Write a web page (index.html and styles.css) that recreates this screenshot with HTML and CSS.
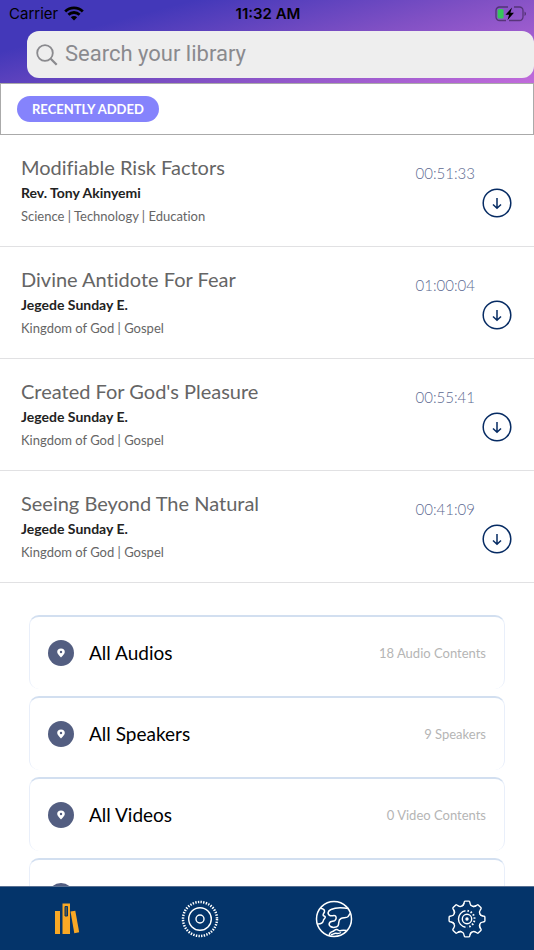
FILE: index.html
```html
<!DOCTYPE html>
<html lang="en">
<head>
<meta charset="utf-8">
<meta name="viewport" content="width=device-width, initial-scale=1">
<title>Library</title>
<link rel="stylesheet" href="styles.css">
</head>
<body>
<svg class="sprite" aria-hidden="true">
  <symbol id="download" viewBox="0 0 30 30"><circle cx="15" cy="15" r="13.8" fill="none" stroke="currentColor" stroke-width="1.5"/><path d="M15 10v10M11 16.5l4 3.8 4-3.8" fill="none" stroke="currentColor" stroke-width="1.5"/></symbol>
  <symbol id="pin" viewBox="0 0 26 26"><circle cx="13" cy="13" r="13" fill="#535e81"/><path fill="#fff" fill-rule="evenodd" d="M13 17.500c-2-2.300-3.800-3.600-3.800-5.500a3.800 3.500 0 0 1 7.600 0c0 1.900-1.800 3.200-3.800 5.500zM13 10.800a1.200 1.200 0 1 0 0 2.400 1.200 1.200 0 0 0 0-2.400z"/></symbol>
</svg>
<div class="app">
  <header class="top">
    <div class="status">
      <div class="carrier">Carrier
        <svg width="20" height="15" viewBox="0 0 20 15" fill="none" stroke="#000" stroke-width="2.800"><path d="M1.200 5.400a12.500 12.500 0 0 1 17.600 0M4.400 8.800a8 8 0 0 1 11.200 0"/><path d="M10 14.500l-3.200-3.300a4.600 4.600 0 0 1 6.400 0z" fill="#000" stroke="none"/></svg>
      </div>
      <time class="clock">11:32 AM</time>
      <svg class="battery" width="32" height="16" viewBox="0 0 32 16"><path d="M13 1H4.500A3.500 3.500 0 0 0 1 4.500V11a3.500 3.500 0 0 0 3.500 3.500h6.500M19 1h5.500A3.500 3.500 0 0 1 28 4.500V11a3.500 3.500 0 0 1-3.500 3.500H14" fill="none" stroke="#000" stroke-opacity=".4" stroke-width="1.300"/><path d="M29.500 5.500c2 .8 2 3.700 0 4.500z" fill="#000" fill-opacity=".4"/><rect x="2.600" y="3" width="6" height="9.500" rx="1.500" fill="#34c759"/><path d="M17 1.500l-6.500 7.200h3.600L12.500 14l6.500-7.200h-3.600z" fill="#000"/></svg>
    </div>
    <label class="search">
      <svg width="22" height="22" viewBox="0 0 22 22" fill="none" stroke="#8a8a8e" stroke-width="1.800"><circle cx="9" cy="9" r="7.800"/><path d="M14.700 14.700l6 6" stroke-width="2.300"/></svg>
      <input type="search" placeholder="Search your library" aria-label="Search your library">
    </label>
  </header>
  <main class="content">
    <div class="heading"><h1 class="pill">RECENTLY ADDED</h1></div>
    <ul class="tracks">
      <li class="track"><div class="info"><h2>Modifiable Risk Factors</h2><p class="speaker">Rev. Tony Akinyemi</p><p class="tags">Science | Technology | Education</p></div><time class="duration">00:51:33</time><button class="download" aria-label="Download"><svg width="30" height="30"><use href="#download"/></svg></button></li>
      <li class="track"><div class="info"><h2>Divine Antidote For Fear</h2><p class="speaker">Jegede Sunday E.</p><p class="tags">Kingdom of God | Gospel</p></div><time class="duration">01:00:04</time><button class="download" aria-label="Download"><svg width="30" height="30"><use href="#download"/></svg></button></li>
      <li class="track"><div class="info"><h2>Created For God's Pleasure</h2><p class="speaker">Jegede Sunday E.</p><p class="tags">Kingdom of God | Gospel</p></div><time class="duration">00:55:41</time><button class="download" aria-label="Download"><svg width="30" height="30"><use href="#download"/></svg></button></li>
      <li class="track"><div class="info"><h2>Seeing Beyond The Natural</h2><p class="speaker">Jegede Sunday E.</p><p class="tags">Kingdom of God | Gospel</p></div><time class="duration">00:41:09</time><button class="download" aria-label="Download"><svg width="30" height="30"><use href="#download"/></svg></button></li>
    </ul>
    <div class="categories">
      <a class="category" href="#audios"><svg width="26" height="26"><use href="#pin"/></svg><span class="name">All Audios</span><span class="count">18 Audio Contents</span></a>
      <a class="category" href="#speakers"><svg width="26" height="26"><use href="#pin"/></svg><span class="name">All Speakers</span><span class="count">9 Speakers</span></a>
      <a class="category" href="#videos"><svg width="26" height="26"><use href="#pin"/></svg><span class="name">All Videos</span><span class="count">0 Video Contents</span></a>
      <a class="category" href="#more" aria-label="More"><svg width="26" height="26"><use href="#pin"/></svg></a>
    </div>
  </main>
  <nav class="tabs">
    <a href="#library" aria-label="Library"><svg width="38" height="38" viewBox="0 0 38 38"><g fill="#f9a825"><path d="M7 11h5v23H7zM14.500 3.500H22V34h-7.500z"/><path d="M22.500 11.500l4.800-.8L31.200 32.300l-4.900.9z"/></g><path d="M17 6.500h2.500v9.500H17z" fill="#5a5a48" stroke="#04346a"/></svg></a>
    <a href="#player" aria-label="Player"><svg width="38" height="38" viewBox="0 0 38 38" fill="none" stroke="#fff"><circle cx="19" cy="19" r="17" stroke-width="2.500" stroke-dasharray="1.400 1.270"/><circle cx="19" cy="19" r="11.300" stroke-width="1.400"/><circle cx="19" cy="19" r="4" stroke-width="1.400"/></svg></a>
    <a href="#world" aria-label="World"><svg width="38" height="38" viewBox="0 0 38 38" fill="none" stroke="#fff" stroke-width="1.500" stroke-linejoin="round"><circle cx="19" cy="19" r="17.500"/><path d="M33.700 8.500C28 7.500 20 7.500 16 9.500c-3.500 1.500-4 5-.7 6.200 2 .5 4-.8 5.200.3 1.200 1.500.7 3.500-.8 4.600-1.500 1-4 .5-5 1.900-.9 1.500-.6 3 .8 4 2.500 1.500 6 1 7.500-.8 1.500-2-.5-5.500 3-7.200 2-1 5-.5 6.500-1.500 1.500-1.200 1.800-3 3.200-4.200M5.800 8.300c2.500.5 4 1.500 3.700 3.500-.4 1.500-1.800 2.200-1.300 3.600.6.700 2 .6 2.100 1.600 0 1.500-1.800 2-2 3.700-.3 1.800-2.300 3.300-5.300 3.300M14.500 35.500c-.5-2 1-3.500 3-4 1.700-.4 2-2 4.300-1.900 1.400.1 1.800 1.200 3 1.200 1.500 0 2-1.200 6.700-.3M16 34.500c2 .5 3-1.500 5-1.200 2 .5 3.500.2 5-.8"/></svg></a>
    <a href="#settings" aria-label="Settings"><svg width="38" height="38" viewBox="0 0 38 38" fill="none" stroke="#fff" stroke-width="1.400" stroke-linejoin="round"><g><path id="tooth" d="M13.700 6.200Q15.600 5.500 15.900 3.600L16.300 1.900Q16.500 1.100 17.300 1.100H20.700Q21.500 1.100 21.700 1.900L22.100 3.600Q22.400 5.500 24.300 6.200Q26 7 28.050 5.700"/><use href="#tooth" transform="rotate(45 19 19)"/><use href="#tooth" transform="rotate(90 19 19)"/><use href="#tooth" transform="rotate(135 19 19)"/><use href="#tooth" transform="rotate(180 19 19)"/><use href="#tooth" transform="rotate(225 19 19)"/><use href="#tooth" transform="rotate(270 19 19)"/><use href="#tooth" transform="rotate(315 19 19)"/></g><circle cx="19" cy="19" r="4.700"/><circle cx="19" cy="19" r="1" fill="#fff"/><path d="M17.500 10.800a8.300 8.300 0 0 0 0 16.400"/><path d="M19.500 10.800a8.300 8.300 0 0 1 0 16.400" stroke-width="2" stroke-dasharray="1.500 1.800"/></svg></a>
  </nav>
</div>
</body>
</html>
```

FILE: styles.css
```css
* { box-sizing: border-box; }
body { margin: 0; background: #fff; font-family: Lato, sans-serif; font-variant-ligatures: none; }
h1, h2, p, ul { margin: 0; padding: 0; font-weight: 400; }
svg { display: block; flex: none; }
.sprite { position: absolute; width: 0; height: 0; }
.app { height: 100vh; display: flex; flex-direction: column; }
.top { flex: none; padding: 0 0 5px 27px; background: linear-gradient(165deg, #4338b9 23%, #8050c4 58%, #c16bdb 100%); overflow: hidden; }
.status { display: grid; grid-template-columns: 1fr auto 1fr; align-items: center; height: 31px; margin-left: -27px; padding: 0 7px 4px 9px; font: 15px/20px Inter, sans-serif; color: #000; }
.carrier { display: flex; align-items: center; gap: 6px; }
.clock { font-weight: 600; }
.battery { justify-self: end; }
.search { display: flex; align-items: center; gap: 7px; height: 47px; padding: 0 9px; border-radius: 12px; background: #eee; }
.search input { flex: 1; min-width: 0; height: 100%; padding: 0 0 2px; border: 0; outline: 0; background: none; font: 22px/28px Roboto, sans-serif; color: #333; }
.search input::placeholder { color: #8a8a8e; opacity: 1; }
.content { flex: 1; min-height: 0; overflow: hidden; }
.heading { padding: 12px 16px; border: 1px solid #aaa; }
.pill { width: fit-content; padding: 0 15px; border-radius: 13px; background: #8583fc; color: #fff; font-size: 13px; font-weight: 700; line-height: 26px; }
.tracks { list-style: none; }
.track { display: flex; align-items: flex-start; padding: 19px 22px 18px 21px; border-bottom: 1px solid #e1e1e3; }
.info { flex: 1; min-width: 0; }
.info h2 { margin-bottom: 1px; font-size: 20px; line-height: 26px; color: #656565; }
.speaker { font-size: 14px; font-weight: 700; line-height: 24px; color: #222; }
.tags { font-size: 13px; line-height: 23px; color: #666; }
.duration { margin: 9px 7px 0 0; font-size: 15px; font-weight: 300; line-height: 20px; color: #5d6a91; }
.download { margin-top: 34px; padding: 0; border: 0; background: none; color: #062b63; }
.categories { display: grid; gap: 7px; padding: 32px 29px; }
.category { display: flex; align-items: center; height: 74px; padding: 0 18px; border: 1px solid #e9effa; border-top: 2px solid #d2dff0; border-bottom: 0; border-radius: 10px; color: #000; text-decoration: none; }
.name { flex: 1; margin-left: 15px; font-size: 19px; line-height: 24px; }
.count { font-size: 13px; line-height: 18px; color: #b5b5b5; }
.tabs { flex: none; display: grid; grid-template-columns: repeat(4, 1fr); justify-items: center; align-items: center; height: 64px; border-top: 1px solid #587092; background: #04346a; }
```
